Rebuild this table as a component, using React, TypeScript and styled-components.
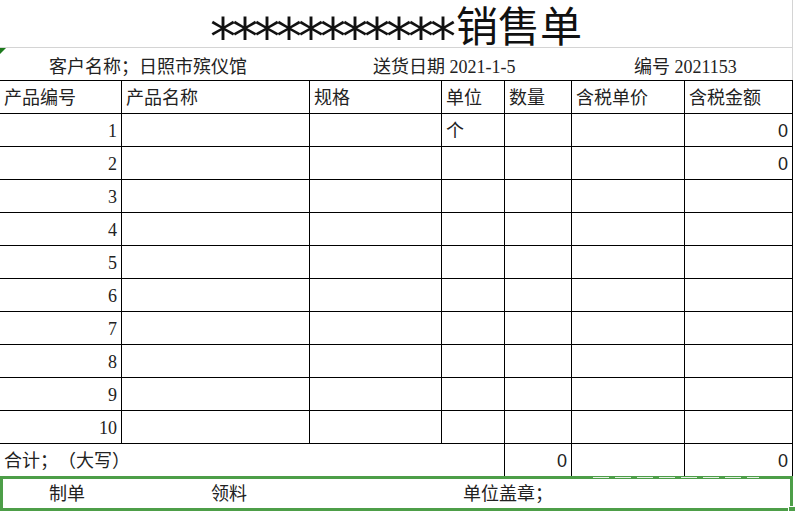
import React from "react";
import styled, { createGlobalStyle } from "styled-components";

const Global = createGlobalStyle`
  html, body { margin: 0; padding: 0; background: #fff; }
  body {
    font-family: "Liberation Serif", "Noto Sans CJK SC", serif;
    color: #1a1a1a;
    text-spacing-trim: space-all;
  }
`;

const COLS = "122px 188px 132px 63px 67px 113px 108px";
const GRID = "#d4d4d4";
const LINE = "#000";
const GREEN = "#4d9e48";

const Sheet = styled.div`
  position: relative;
  width: 793px;
`;

const TitleRow = styled.div`
  height: 48px;
  box-sizing: border-box;
  border-bottom: 1px solid ${GRID};
  border-right: 1px solid ${GRID};
  display: flex;
  align-items: center;
  justify-content: center;
`;

const Title = styled.h1`
  margin: 0;
  font-weight: 400;
  font-size: 42px;
  line-height: 47px;
  white-space: nowrap;
  font-family: "Noto Sans CJK SC", sans-serif;
  color: #111;
  display: flex;
  align-items: center;
`;

const Stars = styled.span`
  display: inline-block;
  font-family: "DejaVu Sans", sans-serif;
  font-size: 52px;
  letter-spacing: -4px;
  line-height: 47px;
  height: 47px;
  padding-top: 14px;
  box-sizing: border-box;
  margin-right: 4px;
`;

const InfoRow = styled.div`
  position: relative;
  height: 32px;
  box-sizing: border-box;
  border-right: 1px solid ${GRID};
  display: flex;
  align-items: flex-end;
  padding-left: 49px;
  padding-bottom: 2px;
  font-size: 18px;
  line-height: 22px;
  color: #222;
  white-space: nowrap;
`;

const InfoItem = styled.span<{ $w?: number }>`
  width: ${(p) => (p.$w ? `${p.$w}px` : "auto")};
  flex: none;
`;

const Triangle = styled.span`
  position: absolute;
  left: 0;
  top: 0;
  width: 0;
  height: 0;
  border-top: 6px solid #1d7a1d;
  border-right: 6px solid transparent;
`;

const Table = styled.div`
  border-top: 1px solid ${LINE};
  width: 793px;
`;

const Row = styled.div<{ $h?: number; $noBottom?: boolean }>`
  display: grid;
  grid-template-columns: ${COLS};
  height: ${(p) => p.$h ?? 33}px;
  box-sizing: border-box;
  border-bottom: ${(p) => (p.$noBottom ? "none" : `1px solid ${LINE}`)};
`;

const Cell = styled.div<{ $align?: "left" | "right"; $noRight?: boolean; $sans?: boolean }>`
  box-sizing: border-box;
  border-right: ${(p) => (p.$noRight ? "none" : `1px solid ${LINE}`)};
  display: flex;
  align-items: flex-end;
  justify-content: ${(p) => (p.$align === "right" ? "flex-end" : "flex-start")};
  padding: 0 4px 4px 4px;
  font-size: 18px;
  line-height: 22px;
  white-space: nowrap;
  color: #222;
  font-family: ${(p) =>
    p.$sans
      ? `"Liberation Sans", "Noto Sans CJK SC", sans-serif`
      : `"Liberation Serif", "Noto Sans CJK SC", serif`};
`;

const SpanCell = styled(Cell)<{ $span: number }>`
  grid-column: span ${(p) => p.$span};
`;

const Footer = styled.div`
  position: relative;
  height: 35px;
  width: 793px;
  box-sizing: border-box;
  border: 3px solid ${GREEN};
  display: flex;
  align-items: center;
  padding-left: 46px;
  font-size: 18px;
  line-height: 22px;
  color: #222;
  white-space: nowrap;
`;

const Ants = styled.span`
  position: absolute;
  top: -2px;
  left: 590px;
  width: 166px;
  height: 1px;
  background: repeating-linear-gradient(
    90deg,
    rgba(255, 255, 255, 0.85) 0 16px,
    transparent 16px 22px
  );
`;

const Handle = styled.span`
  position: absolute;
  right: -6px;
  bottom: -6px;
  width: 6px;
  height: 6px;
  background: ${GREEN};
  border: 1px solid #fff;
`;

const headers = ["产品编号", "产品名称", "规格", "单位", "数量", "含税单价", "含税金额"];

export default function App() {
  const rows = Array.from({ length: 10 }, (_, i) => i + 1);
  return (
    <Sheet>
      <Global />
      <TitleRow>
        <Title>
          <Stars>***********</Stars>
          <span>销售单</span>
        </Title>
      </TitleRow>
      <InfoRow>
        <Triangle />
        <InfoItem $w={324}>客户名称；日照市殡仪馆</InfoItem>
        <InfoItem $w={261}>送货日期 2021-1-5</InfoItem>
        <InfoItem>编号 2021153</InfoItem>
      </InfoRow>
      <Table>
        <Row>
          {headers.map((h) => (
            <Cell key={h}>{h}</Cell>
          ))}
        </Row>
        {rows.map((n) => (
          <Row key={n}>
            <Cell $align="right">{n}</Cell>
            <Cell />
            <Cell />
            <Cell>{n === 1 ? "个" : ""}</Cell>
            <Cell />
            <Cell />
            <Cell $align="right" $sans>
              {n <= 2 ? "0" : ""}
            </Cell>
          </Row>
        ))}
        <Row $h={32} $noBottom>
          <SpanCell $span={4}>合计；（大写）</SpanCell>
          <Cell $align="right" $sans>0</Cell>
          <Cell />
          <Cell $align="right" $sans>0</Cell>
        </Row>
      </Table>
      <Footer>
        <Ants />
        <InfoItem $w={162}>制单</InfoItem>
        <InfoItem $w={252}>领料</InfoItem>
        <InfoItem>单位盖章；</InfoItem>
        <Handle />
      </Footer>
    </Sheet>
  );
}
